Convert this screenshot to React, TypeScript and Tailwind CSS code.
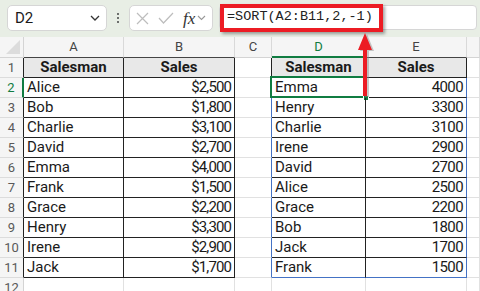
import React from "react";

const left = [
  ["Alice", "$2,500"],
  ["Bob", "$1,800"],
  ["Charlie", "$3,100"],
  ["David", "$2,700"],
  ["Emma", "$4,000"],
  ["Frank", "$1,500"],
  ["Grace", "$2,200"],
  ["Henry", "$3,300"],
  ["Irene", "$2,900"],
  ["Jack", "$1,700"],
];

const right = [
  ["Emma", "4000"],
  ["Henry", "3300"],
  ["Charlie", "3100"],
  ["Irene", "2900"],
  ["David", "2700"],
  ["Alice", "2500"],
  ["Grace", "2200"],
  ["Bob", "1800"],
  ["Jack", "1700"],
  ["Frank", "1500"],
];

const cell = "h-[20px] border-r border-b flex items-center text-[15px] leading-none text-[#1a1a1a]";

function ColHeader({ label, active, table }: { label: string; active?: boolean; table?: boolean }) {
  return (
    <div
      className={`h-[21px] bg-[#f5f5f5] border-r border-r-[#d9d9d9] flex items-center justify-center text-[13px] ${
        active
          ? "border-b-2 border-b-[#107c41] text-[#107c41]"
          : table
          ? "border-b border-b-[#444] text-[#444]"
          : "border-b border-b-[#d4d4d4] text-[#444]"
      }`}
    >
      {label}
    </div>
  );
}

function RowHeader({ n, active, table }: { n: number; active?: boolean; table?: boolean }) {
  return (
    <div
      className={`h-[20px] bg-[#f5f5f5] border-b border-b-[#dcdcdc] flex items-center justify-center text-[13px] ${
        active
          ? "border-r-2 border-r-[#107c41] text-[#107c41]"
          : table
          ? "border-r border-r-[#222] text-[#595959]"
          : "border-r border-r-[#d4d4d4] text-[#595959]"
      }`}
    >
      {n}
    </div>
  );
}

export default function App() {
  return (
    <div className="relative w-[480px] h-[291px] overflow-hidden bg-white font-['Roboto',sans-serif]">
      {/* formula bar */}
      <div className="h-[37px] bg-[#e8eee5] flex items-start pt-[5px] pl-[7px]">
        <div className="w-[100px] h-[26px] bg-white border border-[#d6d6d6] rounded-[5px] flex items-center justify-between pl-[7px] pr-[6px]">
          <span className="text-[15px] text-[#1a1a1a]">D2</span>
          <svg width="10" height="6" viewBox="0 0 10 6" fill="none" stroke="#333" strokeWidth="1.3">
            <path d="M1 1l4 4 4-4" />
          </svg>
        </div>
        <div className="w-[22px] h-[26px] flex flex-col items-center justify-center gap-[2px]">
          <span className="w-[2px] h-[2px] bg-[#444] rounded-full" />
          <span className="w-[2px] h-[2px] bg-[#444] rounded-full" />
          <span className="w-[2px] h-[2px] bg-[#444] rounded-full" />
        </div>
        <div className="w-[84px] h-[26px] bg-white border border-[#d6d6d6] rounded-[5px] flex items-center pl-[6px] gap-[9px]">
          <svg width="13" height="13" viewBox="0 0 13 13" stroke="#bdbdbd" strokeWidth="1.2">
            <path d="M1 1l11 11M12 1L1 12" />
          </svg>
          <svg width="16" height="12" viewBox="0 0 16 12" fill="none" stroke="#bdbdbd" strokeWidth="1.2">
            <path d="M1 6l4.5 5L15 1" />
          </svg>
          <div className="flex items-center gap-[2px]">
            <span className="font-['Liberation_Serif',serif] italic text-[17px] text-[#333] leading-none">fx</span>
            <svg width="9" height="6" viewBox="0 0 9 6" fill="none" stroke="#999" strokeWidth="1.1">
              <path d="M1 1l3.5 3.5L8 1" />
            </svg>
          </div>
        </div>
        <div className="ml-[6px] w-[258px] h-[25px] bg-white border border-[#d6d6d6] rounded-[4px] flex items-center pl-[7px]">
          <span className="font-['Liberation_Mono',monospace] text-[13.5px] text-[#222]">=SORT(A2:B11,2,-1)</span>
        </div>
      </div>

      {/* sheet */}
      <div className="grid grid-cols-[24px_100px_111px_37px_94px_101px_1fr]">
        <div className="h-[21px] bg-[#f5f5f5] border-r border-b border-[#d4d4d4] flex items-end justify-end p-[3px]">
          <div className="w-0 h-0 border-l-[14px] border-l-transparent border-b-[14px] border-b-[#dcdcdc]" />
        </div>
        <ColHeader label="A" table />
        <ColHeader label="B" table />
        <ColHeader label="C" />
        <ColHeader label="D" active />
        <ColHeader label="E" table />
        <ColHeader label="" />

        {/* row 1 */}
        <RowHeader n={1} table />
        <div className={`${cell} bg-[#e8e8e8] border-[#222] justify-center font-bold`}>Salesman</div>
        <div className={`${cell} bg-[#e8e8e8] border-[#222] justify-center font-bold`}>Sales</div>
        <div className={`${cell} border-r-[#222] border-b-[#e1e1e1]`} />
        <div className={`${cell} bg-[#e8e8e8] border-[#222] justify-center font-bold`}>Salesman</div>
        <div className={`${cell} bg-[#e8e8e8] border-[#222] justify-center font-bold`}>Sales</div>
        <div className={`${cell} border-[#e1e1e1]`} />

        {left.map(([name, amount], i) => {
          const last = i === left.length - 1;
          return (
            <React.Fragment key={name}>
              <RowHeader n={i + 2} active={i === 0} table />
              <div className={`${cell} border-[#222] pl-[3px]`}>{name}</div>
              <div className={`${cell} border-[#222] justify-end pr-[3px] tracking-[-0.9px]`}>{amount}</div>
              <div className={`${cell} border-r-[#4472c4] border-b-[#e1e1e1]`} />
              <div className={`${cell} relative pl-[3px] border-r-[#222] ${last ? "border-b-[#4472c4]" : "border-b-[#222]"}`}>
                {right[i][0]}
                {i === 0 && (
                  <>
                    <div className="absolute -left-[2px] -top-[2px] -right-[1px] -bottom-[1px] border-2 border-[#107c41]" />
                    <div className="absolute -right-[4px] -bottom-[4px] w-[6px] h-[6px] bg-[#107c41] border border-white" />
                  </>
                )}
              </div>
              <div className={`${cell} justify-end pr-[3px] tracking-[-0.6px] border-r-[#4472c4] ${last ? "border-b-[#4472c4]" : "border-b-[#222]"}`}>
                {right[i][1]}
              </div>
              <div className={`${cell} border-[#e1e1e1]`} />
            </React.Fragment>
          );
        })}

        {/* row 12 */}
        <RowHeader n={12} />
        <div className={`${cell} border-[#e1e1e1]`} />
        <div className={`${cell} border-[#e1e1e1]`} />
        <div className={`${cell} border-[#e1e1e1]`} />
        <div className={`${cell} border-[#e1e1e1]`} />
        <div className={`${cell} border-[#e1e1e1]`} />
        <div className={`${cell} border-[#e1e1e1]`} />
      </div>

      {/* annotation: red box and arrow */}
      <div className="absolute left-[220px] top-[4px] w-[163px] h-[28px] border-4 border-[#ec1c24] shadow-[2px_2px_3px_rgba(0,0,0,0.35)]" />
      <svg className="absolute left-[355px] top-[31px]" width="22" height="70" viewBox="0 0 22 70">
        <g fill="#888" opacity="0.45" transform="translate(2 1)">
          <path d="M10 2L17 19H12V65H8V19H3Z" />
        </g>
        <path d="M10 2L17 19H12V65H8V19H3Z" fill="#ec1c24" />
      </svg>
    </div>
  );
}
